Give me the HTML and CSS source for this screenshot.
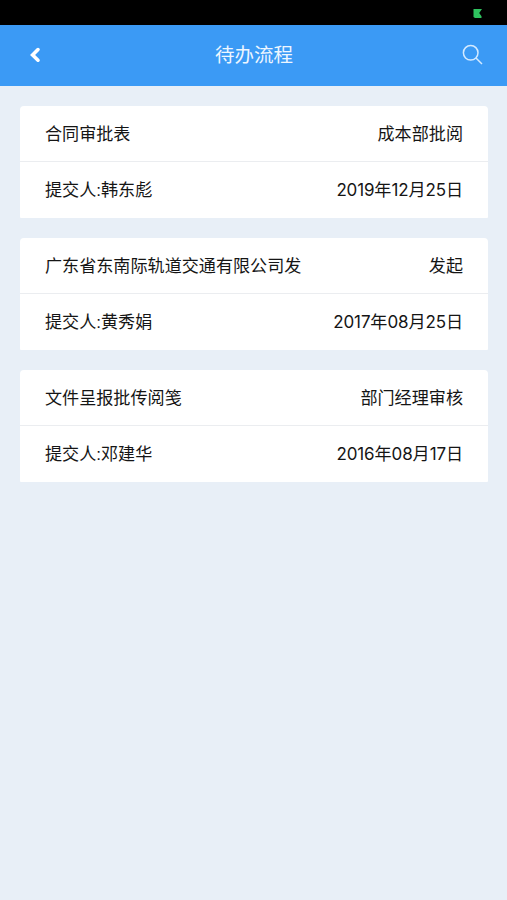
FILE: index.html
```html
<!DOCTYPE html>
<html lang="zh-CN">
<head>
<meta charset="utf-8">
<title>待办流程</title>
<link rel="stylesheet" href="styles.css">
</head>
<body>
<div class="status"><svg class="signal" viewBox="0 0 9 9"><path d="M0.5 0H9L6.2 4 8.5 7.2V9H2L0.5 8z"/></svg></div>
<header class="navbar">
  <svg class="back" viewBox="0 0 12 16"><path d="M9 2.6L3.6 8 9 13.2"/></svg>
  <h1>待办流程</h1>
  <svg class="search" viewBox="0 0 22 22"><circle cx="8.7" cy="8.8" r="7.3"/><path d="M14 14l6 6"/></svg>
</header>
<main class="list">
  <section class="card">
    <div class="row"><span>合同审批表</span><span>成本部批阅</span></div>
    <div class="row"><span>提交人:韩东彪</span><time><b>2019</b>年<b>12</b>月<b>25</b>日</time></div>
  </section>
  <section class="card">
    <div class="row"><span>广东省东南际轨道交通有限公司发</span><span>发起</span></div>
    <div class="row"><span>提交人:黄秀娟</span><time><b>2017</b>年<b>08</b>月<b>25</b>日</time></div>
  </section>
  <section class="card">
    <div class="row"><span>文件呈报批传阅笺</span><span>部门经理审核</span></div>
    <div class="row"><span>提交人:邓建华</span><time><b>2016</b>年<b>08</b>月<b>17</b>日</time></div>
  </section>
</main>
</body>
</html>
```
FILE: styles.css
```css
* { box-sizing: border-box; }
body { margin: 0; min-height: 900px; background: #e8eff7; color: #151515; font-family: "Liberation Sans", "Noto Sans CJK SC", sans-serif; }
.status { height: 25px; background: #000; display: flex; justify-content: flex-end; padding: 9px 25px 0 0; }
.signal { width: 9px; height: 9px; fill: #2fc35f; }
.navbar { height: 61px; background: #3b9af5; display: grid; grid-template-columns: 22px 1fr 22px; align-items: center; justify-items: center; padding: 0 23px 1px 24px; }
.navbar svg { fill: none; stroke: #fff; }
.back { width: 12px; height: 16px; stroke-width: 3.6; stroke-linecap: round; }
.navbar .search { width: 22px; height: 22px; stroke: #d4eaff; stroke-width: 1.5; }
h1 { margin: 0; font-size: 19.5px; line-height: 29px; font-weight: 400; color: #edf6ff; }
.list { display: flex; flex-direction: column; gap: 20px; padding: 20px 19px 0 20px; }
.card { height: 112px; background: #fff; border-radius: 4px 4px 1px 1px; }
.row { height: 55px; display: flex; align-items: center; justify-content: space-between; padding: 3px 25px 0; font-size: 17.1px; line-height: 26px; white-space: nowrap; }
.row + .row { height: 57px; padding-top: 2px; border-top: 1px solid #ebedf0; }
time b { font: 400 17px/1 Inter, sans-serif; letter-spacing: -0.15px; }
```
